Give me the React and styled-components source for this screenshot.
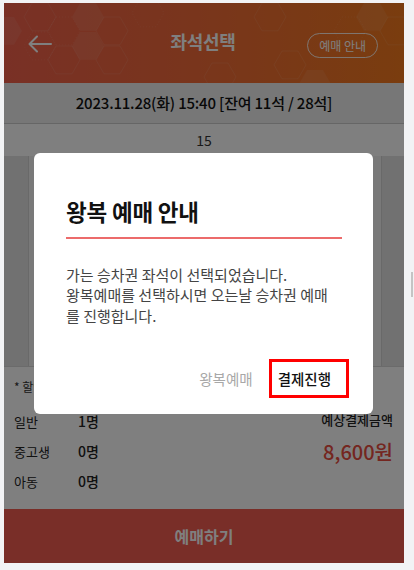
import React from 'react';
import styled, { createGlobalStyle } from 'styled-components';

const GlobalStyle = createGlobalStyle`
	* {
		box-sizing: border-box;
	}
	body {
		margin: 0;
		background: #f2f3f5;
		font-family: 'Noto Sans CJK KR', 'Noto Sans', sans-serif;
	}
`;

const Page = styled.div`
	position: relative;
	width: 400px;
	height: 560px;
	margin: 3px 0 0 4px;
	display: flex;
	flex-direction: column;
	background: #fff;
	overflow: hidden;
`;

const Header = styled.header`
	position: relative;
	height: 80px;
	flex-shrink: 0;
	display: grid;
	grid-template-columns: 1fr auto 1fr;
	align-items: center;
	padding: 0 26px 0 24px;
	background: linear-gradient(90deg, #f2614c 0%, #f26a3a 45%, #f47a1e 100%);
	color: #fff;
	overflow: hidden;
`;

const Pattern = styled.svg`
	position: absolute;
	left: 0;
	top: 0;
	pointer-events: none;
`;

const BackButton = styled.button`
	position: relative;
	width: 28px;
	height: 28px;
	padding: 0;
	border: 0;
	background: none;
	display: flex;
	align-items: center;
	margin-top: 2px;
`;

const Title = styled.h1`
	position: relative;
	margin: 0 0 4px;
	font-size: 18px;
	font-weight: 700;
	letter-spacing: -0.3px;
`;

const GuidePill = styled.button`
	position: relative;
	justify-self: end;
	height: 25px;
	padding: 0 11px;
	margin-top: 5px;
	border: 1px solid rgba(255, 255, 255, 0.85);
	border-radius: 13px;
	background: none;
	color: #fff;
	font-family: inherit;
	font-size: 12px;
	line-height: 23px;
`;

const DateBar = styled.div`
	height: 41px;
	flex-shrink: 0;
	display: flex;
	align-items: center;
	justify-content: center;
	background: #eeeeee;
	border-bottom: 1px solid #cccccc;
	color: #111;
	font-size: 15px;
	font-weight: 500;
	letter-spacing: -0.2px;
	padding-bottom: 2px;
`;

const SeatNumber = styled.div`
	height: 32px;
	flex-shrink: 0;
	display: flex;
	align-items: center;
	justify-content: center;
	color: #333;
	font-size: 14px;
`;

const SeatArea = styled.div`
	height: 211px;
	flex-shrink: 0;
	display: grid;
	grid-template-columns: 25px 1fr 23px;
	background: #e6e6e6;
	border-bottom: 1px solid #d6d6d6;
`;

const SeatWall = styled.div`
	background: #e3e3e3;
	border-${p => p.side}: 1px solid #d2d2d2;
`;

const SeatFloor = styled.div`
	background: #f3f3f3;
`;

const Info = styled.div`
	flex: 1;
	display: flex;
	flex-direction: column;
	padding: 10px 11px 0 10px;
	color: #333;
`;

const Note = styled.p`
	margin: 0 0 9px;
	font-size: 12px;
	line-height: 20px;
`;

const InfoBody = styled.div`
	display: flex;
	justify-content: space-between;
`;

const CountList = styled.div`
	display: flex;
	flex-direction: column;
`;

const CountRow = styled.div`
	display: grid;
	grid-template-columns: 64px auto;
	height: 30px;
	align-items: center;
	font-size: 13px;
	color: #222;
	span + span {
		font-size: 14px;
		font-weight: 500;
	}
`;

const Total = styled.div`
	display: flex;
	flex-direction: column;
	align-items: flex-end;
	padding-top: 4px;
`;

const TotalLabel = styled.span`
	font-size: 13px;
	font-weight: 500;
	color: #222;
`;

const TotalPrice = styled.span`
	margin-top: 8px;
	font-size: 20px;
	font-weight: 500;
	color: #e94d41;
`;

const BookButton = styled.button`
	height: 54px;
	flex-shrink: 0;
	border: 0;
	background: #f25c50;
	color: #fff;
	font-family: inherit;
	font-size: 16px;
	font-weight: 700;
`;

const Overlay = styled.div`
	position: absolute;
	inset: 0;
	display: flex;
	align-items: center;
	justify-content: center;
	background: rgba(0, 0, 0, 0.5);
`;

const Modal = styled.div`
	width: 339px;
	height: 261px;
	margin-left: -1px;
	padding: 43px 31px 16px 32px;
	border-radius: 6px;
	background: #fff;
	display: flex;
	flex-direction: column;
`;

const ModalTitle = styled.h2`
	margin: 0;
	padding-bottom: 10px;
	border-bottom: 2px solid #ec6b6b;
	color: #111;
	font-size: 22.5px;
	font-weight: 700;
	line-height: 31px;
	letter-spacing: -0.2px;
`;

const ModalText = styled.p`
	margin: 26px 0 0;
	padding-right: 8px;
	color: #444;
	font-size: 15px;
	line-height: 20.5px;
`;

const ModalActions = styled.div`
	margin-top: auto;
	margin-right: -7px;
	display: flex;
	justify-content: flex-end;
	align-items: center;
	gap: 16px;
`;

const ActionButton = styled.button`
	height: 39px;
	padding: ${p => (p.$marked ? '0 15px 0 6px' : '0')};
	border: ${p => (p.$marked ? '3px solid #ff0000' : '0')};
	background: none;
	font-family: inherit;
	font-size: 14.5px;
	font-weight: ${p => (p.$marked ? 500 : 400)};
	color: ${p => (p.$marked ? '#111' : '#a8a8a8')};
`;

const ScrollThumb = styled.div`
	position: fixed;
	left: 411px;
	top: 272px;
	width: 2px;
	height: 25px;
	background: #c4c4c4;
`;

const hex = (x, y, w = 32) => {
	const h = w * 0.87;
	return `${x + w / 4},${y} ${x + (w * 3) / 4},${y} ${x + w},${y + h / 2} ${x + (w * 3) / 4},${y + h} ${x + w / 4},${y + h} ${x},${y + h / 2}`;
};

const filled = [
	[68, 0],
	[68, 29],
	[-14, 14],
	[352, 0],
	[295, 67],
];
const outlined = [
	[44, 14],
	[44, 43],
	[20, 0],
	[20, 29],
	[92, 14],
	[92, 43],
	[128, -4],
	[250, 0],
	[270, 48],
	[330, 14],
	[376, 14],
	[200, 60],
];

const HeaderPattern = () => (
	<Pattern width="400" height="80" viewBox="0 0 400 80">
		{outlined.map(([x, y], i) => (
			<polygon
				key={`o${i}`}
				points={hex(x, y)}
				fill="none"
				stroke="#fff"
				strokeOpacity="0.09"
				strokeDasharray={i % 3 === 0 ? '1 2' : undefined}
			/>
		))}
		{filled.map(([x, y], i) => (
			<polygon key={`f${i}`} points={hex(x, y)} fill="#fff" fillOpacity="0.08" />
		))}
	</Pattern>
);

const App = () => {
	return (
		<>
			<GlobalStyle />
			<Page>
				<Header>
					<HeaderPattern />
					<BackButton aria-label="뒤로">
						<svg width="24" height="18" viewBox="0 0 24 18" fill="none">
							<path
								d="M23 9H2M9 1.5L1.5 9 9 16.5"
								stroke="#fff"
								strokeWidth="2"
								strokeLinecap="round"
								strokeLinejoin="round"
							/>
						</svg>
					</BackButton>
					<Title>좌석선택</Title>
					<GuidePill>예매 안내</GuidePill>
				</Header>
				<DateBar>2023.11.28(화) 15:40 [잔여 11석 / 28석]</DateBar>
				<SeatNumber>15</SeatNumber>
				<SeatArea>
					<SeatWall side="right" />
					<SeatFloor />
					<SeatWall side="left" />
				</SeatArea>
				<Info>
					<Note>* 할인 승차권은 신분증을 지참하셔야 합니다.</Note>
					<InfoBody>
						<CountList>
							<CountRow>
								<span>일반</span>
								<span>1명</span>
							</CountRow>
							<CountRow>
								<span>중고생</span>
								<span>0명</span>
							</CountRow>
							<CountRow>
								<span>아동</span>
								<span>0명</span>
							</CountRow>
						</CountList>
						<Total>
							<TotalLabel>예상결제금액</TotalLabel>
							<TotalPrice>8,600원</TotalPrice>
						</Total>
					</InfoBody>
				</Info>
				<BookButton>예매하기</BookButton>
				<Overlay>
					<Modal>
						<ModalTitle>왕복 예매 안내</ModalTitle>
						<ModalText>
							가는 승차권 좌석이 선택되었습니다.
							<br />
							왕복예매를 선택하시면 오는날 승차권 예매를 진행합니다.
						</ModalText>
						<ModalActions>
							<ActionButton>왕복예매</ActionButton>
							<ActionButton $marked>결제진행</ActionButton>
						</ModalActions>
					</Modal>
				</Overlay>
			</Page>
			<ScrollThumb />
		</>
	);
};

export default App;
